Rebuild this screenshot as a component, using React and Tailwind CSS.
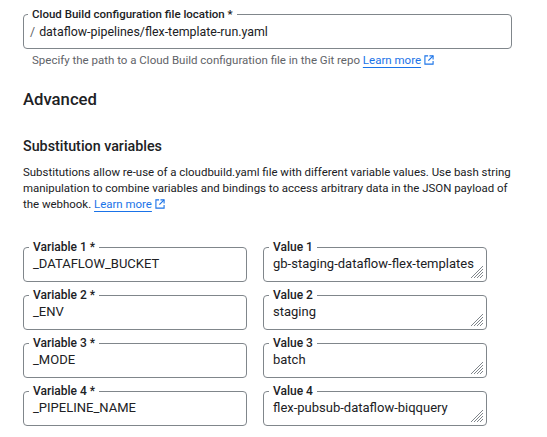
import React from "react";

function ExtIcon() {
  return (
    <svg width="10" height="10" viewBox="0 0 11 11" className="inline-block ml-[3px] align-[-1px]" fill="none" stroke="#1a73e8" strokeWidth="1.2">
      <path d="M4.5 1H1v9h9V6.5" />
      <path d="M6 1h4v4" />
      <path d="M10 1L4.8 6.2" />
    </svg>
  );
}

function Resize() {
  return (
    <svg width="12" height="12" viewBox="0 0 12 12" className="absolute right-[3px] bottom-[3px]" stroke="#80868b" strokeWidth="1">
      <path d="M12 0L0 12" />
      <path d="M12 3L3 12" />
      <path d="M12 6L6 12" />
      <path d="M12 9L9 12" />
    </svg>
  );
}

function Field({ label, value, resize }) {
  return (
    <fieldset className="relative border border-[#80868b] rounded-[4px] pb-[8px] min-w-0">
      <legend className="ml-[5px] px-[4px] text-[12px] leading-[14px] font-medium text-[#202124]">{label}</legend>
      <div className="pl-[9px] pt-[1px] text-[13px] leading-[18px] text-[#202124] whitespace-nowrap overflow-hidden">
        {value}
      </div>
      {resize && <Resize />}
    </fieldset>
  );
}

export default function App() {
  const rows = [
    ["Variable 1 *", "_DATAFLOW_BUCKET", "Value 1", "gb-staging-dataflow-flex-templates"],
    ["Variable 2 *", "_ENV", "Value 2", "staging"],
    ["Variable 3 *", "_MODE", "Value 3", "batch"],
    ["Variable 4 *", "_PIPELINE_NAME", "Value 4", "flex-pubsub-dataflow-biqquery"],
  ];
  return (
    <div className="w-[547px] h-[437px] bg-white overflow-hidden pl-[23px] font-['Roboto',sans-serif] text-[#202124]">
      <div className="w-[489px] pt-[7px]">
        <fieldset className="border border-[#80868b] rounded-[4px] pb-[6px] min-w-0">
          <legend className="ml-[4px] px-[4px] text-[11.5px] leading-[14px] font-medium text-[#202124]">
            Cloud Build configuration file location *
          </legend>
          <div className="flex pl-[6px] pt-[1px] text-[12.4px] leading-[20px]">
            <span className="text-[#5f6368] mr-[4px]">/</span>
            <span>dataflow-pipelines/flex-template-run.yaml</span>
          </div>
        </fieldset>
        <p className="mt-[3px] pl-[9px] text-[11.5px] leading-[16px] text-[#5f6368] whitespace-nowrap">
          Specify the path to a Cloud Build configuration file in the Git repo{" "}
          <a className="text-[#1a73e8] underline underline-offset-[3px] decoration-[#1a73e8]">Learn more</a>
          <ExtIcon />
        </p>
      </div>

      <h2 className="mt-[20px] text-[16.7px] leading-[24px] font-medium">Advanced</h2>
      <h3 className="mt-[24px] text-[14.3px] leading-[20px] font-medium">Substitution variables</h3>
      <p className="mt-[8px] text-[11.45px] leading-[16px] whitespace-nowrap">
        Substitutions allow re-use of a cloudbuild.yaml file with different variable values. Use bash string
        <br />
        manipulation to combine variables and bindings to access arbitrary data in the JSON payload of
        <br />
        the webhook.{" "}
        <a className="text-[#1a73e8] underline underline-offset-[3px] decoration-[#1a73e8]">Learn more</a>
        <ExtIcon />
      </p>

      <div className="mt-[28px] grid grid-cols-[224px_224px] gap-x-[16px] gap-y-[6px]">
        {rows.map((r) => (
          <React.Fragment key={r[0]}>
            <Field label={r[0]} value={r[1]} />
            <Field label={r[2]} value={r[3]} resize />
          </React.Fragment>
        ))}
      </div>
    </div>
  );
}
